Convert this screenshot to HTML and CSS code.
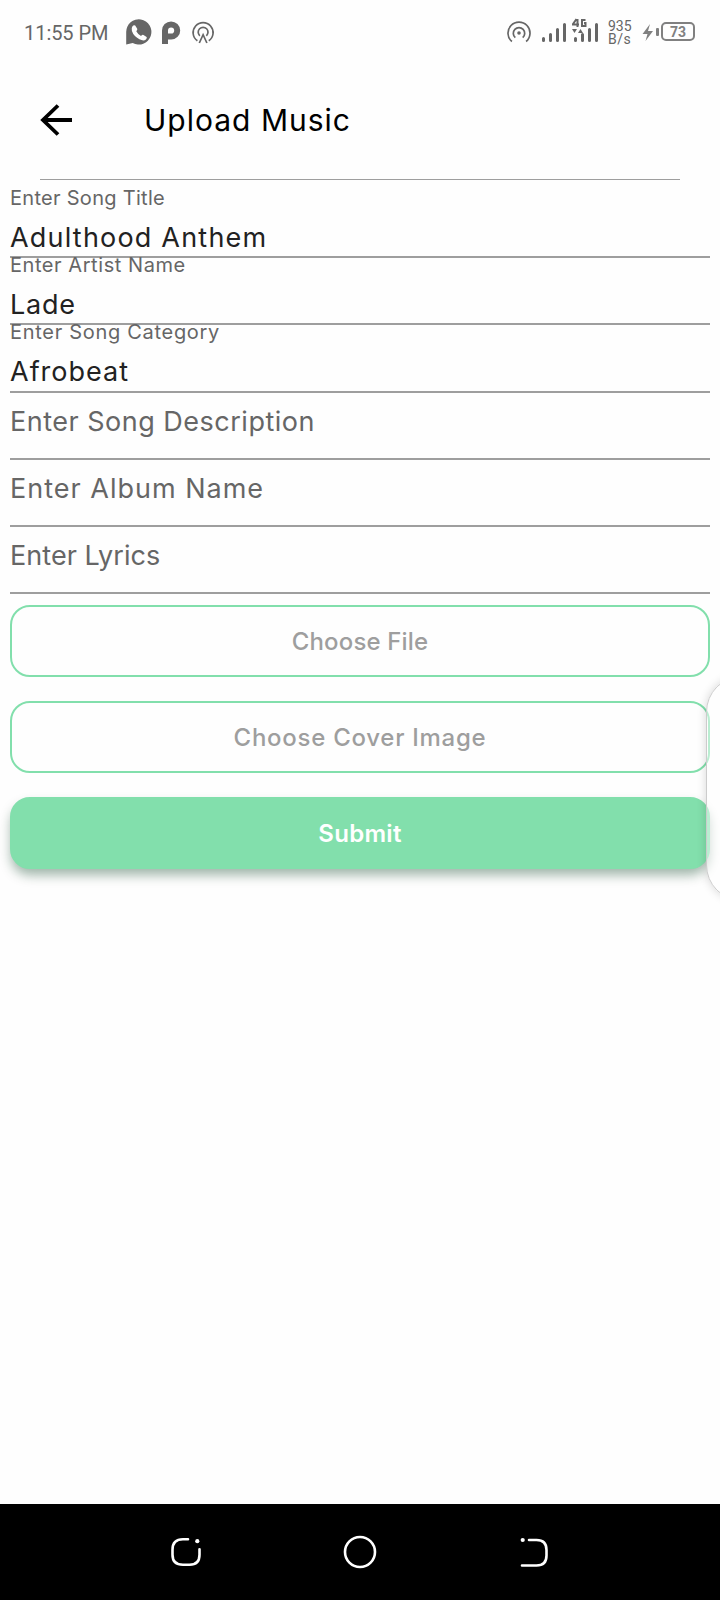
FILE: index.html
```html
<!DOCTYPE html>
<html lang="en">
<head>
<meta charset="utf-8">
<title>Upload Music</title>
<link rel="stylesheet" href="styles.css">
</head>
<body>
<div class="screen">
  <div class="status">
    <span class="clock">11:55 PM</span>
    <svg class="status-left" width="92" height="30" viewBox="124 16 92 30">
      <path fill="#666" d="M126.200 44.500v-12.500a12.600 12.600 0 1 1 6.500 10.900z"/>
      <path fill="#fff" d="M132.500 26.200q1.400-1.600 2.700-.6l2 3.200q.6 1-.9 2.400 1.500 3 4.700 4.700 1.500-1.600 2.500-1l3.100 2.200q.8 1-.7 2.400-2.200 1.900-6.500-.2-5.700-2.900-7.500-8.200-.8-3.300.6-4.900z"/>
      <path fill="none" stroke="#666" stroke-width="6" d="M165 44v-13.500a6.100 6.100 0 1 1 6.200 6.100H167"/>
      <g fill="none" stroke="#666" stroke-width="1.700"><path d="M197.400 40.800a10 10 0 1 1 11.400 0"/><path d="M199.800 35.800a4.900 4.900 0 1 1 6.600 0M199.300 43l3.800-8.300 3.800 8.300"/></g>
    </svg>
    <div class="status-right">
      <svg width="92" height="32" viewBox="506 14 92 32">
        <g fill="none" stroke="#666" stroke-width="1.700"><path d="M511.900 41.500a11 11 0 1 1 14.200 0"/><path d="M515.300 37.700a5.700 5.700 0 1 1 7.400 0"/></g>
        <circle cx="519" cy="33" r="1.800" fill="#666"/>
        <path fill="none" stroke="#666" stroke-width="3" stroke-linecap="round" d="M543.500 38.500v2M550.500 34.500v6M557.500 29.500v11M564.500 24.500v16M575.500 38.500v2M582.500 34.500v6M589.500 29.500v11M596.500 24.500v16"/>
        <path fill="none" stroke="#666" stroke-width="2" d="M576.500 19l-3.500 5v.5h6M577.500 19v8M585.500 20h-3.500v6h3.500v-3h-1.500"/>
        <path fill="#666" d="M572 29h5l-2.500 4zM578 33h5l-2.500-4z"/>
      </svg>
      <div class="speed"><span>935</span><span>B/s</span></div>
      <svg width="54" height="24" viewBox="642 20 54 24">
        <path fill="#808080" d="M650 24l-7.500 10h5l-2 7 7.500-10h-5z"/>
        <rect x="656" y="28" width="3" height="8" rx="1" fill="#808080"/>
        <rect x="662" y="23" width="32" height="17" rx="4" fill="none" stroke="#808080" stroke-width="2"/>
        <text class="charge" x="678" y="37" text-anchor="middle">73</text>
      </svg>
    </div>
  </div>
  <header class="header">
    <svg width="34" height="34" viewBox="0 0 34 34"><path fill="none" stroke="#000" stroke-width="3.800" d="M18 2.500L3 17l15 14.500M3 17h29"/></svg>
    <h1 class="title">Upload Music</h1>
  </header>
  <form class="form">
    <div class="field filled"><label class="label l1">Enter Song Title</label><span class="value v1">Adulthood Anthem</span></div>
    <div class="field filled"><label class="label l2">Enter Artist Name</label><span class="value v2">Lade</span></div>
    <div class="field filled"><label class="label l3">Enter Song Category</label><span class="value v3">Afrobeat</span></div>
    <div class="field"><span class="hint h1">Enter Song Description</span></div>
    <div class="field"><span class="hint h2">Enter Album Name</span></div>
    <div class="field"><span class="hint h3">Enter Lyrics</span></div>
    <div class="actions">
      <button type="button" class="btn"><span class="b1">Choose File</span></button>
      <button type="button" class="btn"><span class="b2">Choose Cover Image</span></button>
      <button type="button" class="btn submit"><span class="b3">Submit</span></button>
    </div>
  </form>
  <div class="edge-panel"></div>
  <nav class="nav">
    <svg width="720" height="96" viewBox="0 1504 720 96" fill="none" stroke="#fff" stroke-width="2.600" stroke-linecap="round">
      <path d="M188 1539.300h-5q-10.500 0-10.500 10.500v5q0 10 10.500 10h6.500q10 0 10-10v-5.500"/><circle cx="197.300" cy="1541.200" r="2.100" fill="#fff" stroke="none"/>
      <circle cx="360" cy="1552" r="15"/>
      <path d="M529 1540h7.500q10 0 10 10v5.500q0 10-10 10h-14.500"/><circle cx="522.700" cy="1540" r="2.100" fill="#fff" stroke="none"/>
    </svg>
  </nav>
</div>
</body>
</html>
```
FILE: styles.css
```css
* { box-sizing: border-box; }
body { margin: 0; background: #fefefe; font-family: Inter, "Open Sans", sans-serif; }
.screen { position: relative; width: 720px; height: 1600px; display: flex; flex-direction: column; overflow: hidden; }
.status { height: 64px; flex: none; display: flex; padding: 0 24px; color: #666; font-family: Roboto, sans-serif; }
.clock { width: 100px; padding-top: 21px; font-size: 20px; line-height: 24px; white-space: nowrap; letter-spacing: -.05px; }
.status-left { margin-top: 16px; }
.status-right { margin-left: auto; display: flex; align-items: flex-start; padding-top: 14px; }
.speed { display: flex; flex-direction: column; width: 44px; padding: 6px 0 0 10px; font-size: 14px; line-height: 13px; }
.speed span + span { letter-spacing: .5px; }
.status-right svg:last-child { margin-top: 6px; }
.charge { font: bold 14px Roboto, sans-serif; fill: #808080; }
.header { height: 116px; flex: none; margin: 0 40px; display: flex; align-items: center; border-bottom: 1px solid #9e9e9e; }
.header svg { margin-bottom: 3px; }
.title { margin: 0 0 4px 70px; font-size: 30px; line-height: 40px; font-weight: 400; letter-spacing: 1px; color: #000; white-space: nowrap; }
.form { padding: 11px 10px 0; }
.field { height: 67.200px; border-bottom: 2px solid #9e9e9e; display: flex; flex-direction: column; align-items: flex-start; white-space: nowrap; }
.label { font-size: 20px; line-height: 24px; color: #666; margin-top: -5px; }
.value { font-size: 27px; line-height: 32px; color: #222; margin-top: 12px; }
.hint { font-size: 27px; line-height: 32px; color: #666; margin-top: 13.500px; }
.l1 { letter-spacing: .29px; }
.l2 { letter-spacing: .56px; }
.l3 { letter-spacing: .7px; }
.v1 { letter-spacing: 1.2px; }
.v2 { letter-spacing: .75px; }
.v3 { letter-spacing: 1px; }
.h1 { letter-spacing: .5px; }
.h2 { letter-spacing: 1px; }
.h3 { letter-spacing: .05px; }
.b1 { letter-spacing: .15px; }
.b2 { letter-spacing: .73px; }
.b3 { letter-spacing: .3px; font-weight: 600; }
.actions { display: flex; flex-direction: column; gap: 24px; padding-top: 10.800px; }
.btn { height: 72px; border: 2px solid #82dfac; border-radius: 20px; background: none; padding: 2px 0 0; font: 500 24px/30px Inter, sans-serif; color: #9e9e9e; }
.submit { background: #82dfac; color: #fff; box-shadow: 0 7px 12px -1px rgba(0,60,30,.38); }
.edge-panel { position: absolute; left: 706px; top: 676px; width: 80px; height: 225px; border: 1px solid #ccc; border-radius: 36px; background: rgba(255,255,255,.45); box-shadow: 0 0 10px rgba(0,0,0,.16); }
.nav { margin-top: auto; height: 96px; background: #000; }
.nav svg { display: block; }
```
